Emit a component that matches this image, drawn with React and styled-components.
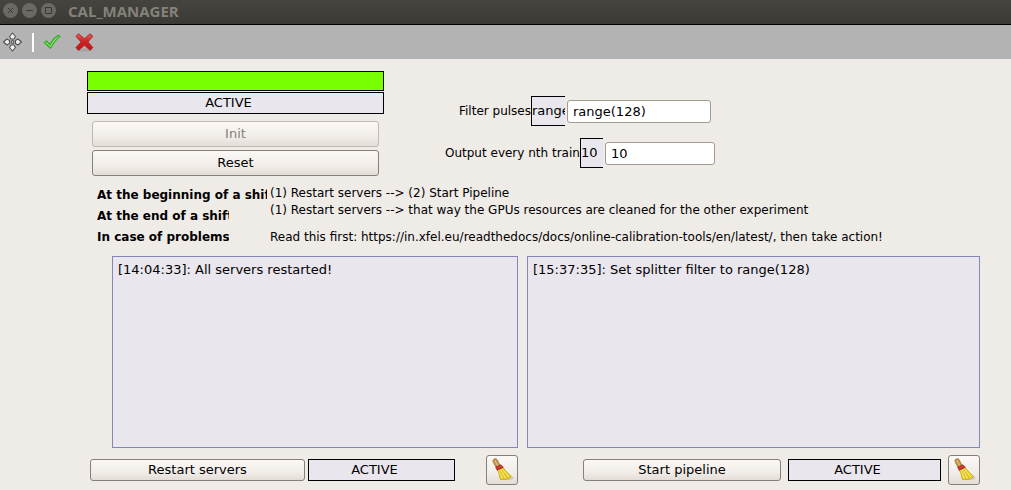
import React, { useState } from 'react';
import styled, { createGlobalStyle } from 'styled-components';

function BroomIcon() {
  return (
    <svg width="24" height="24" viewBox="0 0 24 24" aria-hidden="true">
      <ellipse cx="17.500" cy="20" rx="6" ry="2.200" fill="#cfcac5" />
      <path d="M3 2.200C3.200.8 6 0 7 1.400L9.800 7 6 9.200 3.400 4.500C3 3.800 2.800 3 3 2.200z" fill="#c39345" stroke="#97702f" strokeWidth=".7" />
      <path d="M4.800 2.500l3 5" stroke="#e6c07e" strokeWidth="1.200" />
      <path d="M7 11.500l6-2.500c1 2.500 4 4.800 8.500 9.500-1.500 2-6 3.600-11 3-1.500-3-.8-6.500-3.500-10z" fill="#ead02c" stroke="#bfa11c" strokeWidth=".8" strokeLinejoin="round" />
      <path d="M9 12.500l3.500 8M10.800 12l4.700 8M12.500 11.500l6 7" stroke="#fbee7c" strokeWidth="1" fill="none" />
      <path d="M10 13l4 8M11.800 12l5.500 7.800" stroke="#c9aa1c" strokeWidth=".6" fill="none" />
      <path d="M5.700 9.300L11 6.700l2.200 2.600-6 3z" fill="#c92622" stroke="#8f1515" strokeWidth=".6" strokeLinejoin="round" />
      <path d="M6.800 10.300l5.200-2.500" stroke="#e8605a" strokeWidth=".7" />
    </svg>
  );
}

function MoveIcon() {
  return (
    <svg width="21" height="20" viewBox="0 0 21 20" aria-hidden="true">
      <g fill="#f0f0f0" stroke="#505050" strokeWidth="1.100" strokeLinejoin="round">
        <path d="M10.500 1l3 3.500-1.500 2.500h-3L7.500 4.500z" />
        <path d="M10.500 19l3-3.500-1.500-2.500h-3l-1.500 2.500z" />
        <path d="M1.500 10L5 7l2.500 1.500v3L5 13z" />
        <path d="M19.500 10L16 7l-2.500 1.500v3L16 13z" />
        <circle cx="10.500" cy="10" r="1.400" />
      </g>
    </svg>
  );
}

function ApplyIcon() {
  return (
    <svg width="20" height="20" viewBox="0 0 20 20" aria-hidden="true">
      <path
        d="M2.500 10.500l2.200-1.500 3.300 3.600c2-3.800 4.500-7 8.500-9.200l1.500 1C14 7.500 11.500 11 8.500 16.200z"
        fill="#86ec5c"
        stroke="#37a52e"
        strokeWidth="1.200"
        strokeLinejoin="round"
      />
    </svg>
  );
}

function DeclineIcon() {
  return (
    <svg width="20" height="20" viewBox="0 0 20 20" aria-hidden="true">
      <defs>
        <linearGradient id="decline" x1="0" y1="0" x2="0" y2="1">
          <stop offset="0" stopColor="#e46060" />
          <stop offset=".45" stopColor="#cf2424" />
          <stop offset="1" stopColor="#c01010" />
        </linearGradient>
      </defs>
      <ellipse cx="10.500" cy="18" rx="8" ry="1.500" fill="#a2a2a2" />
      <path
        d="M4.500 1.800L10.500 6.800l5.500-5L18.800 4.300 13.800 10l5 5.500-2.600 2.800-5.700-5-6 5L2 15.600 7.200 10 2 4.400z"
        fill="url(#decline)"
        stroke="#b02222"
        strokeWidth="1"
        strokeLinejoin="round"
      />
    </svg>
  );
}

function Property({ id, label, current, boxWidth, inputWidth, inset }) {
  const [value, setValue] = useState(current);

  return (
    <PropertyRow $inset={inset}>
      <label htmlFor={id}>{label}</label>
      <CurrentValue $width={boxWidth}>{current}</CurrentValue>
      <ValueInput
        id={id}
        type="text"
        $width={inputWidth}
        value={value}
        onChange={(e) => setValue(e.target.value)}
      />
    </PropertyRow>
  );
}

function App() {
  return (
    <Window>
      <GlobalStyle />
      <TitleBar>
        <WindowButton type="button" aria-label="Close">
          <svg width="15" height="15" viewBox="0 0 15 15">
            <path d="M5 5l5 5M10 5l-5 5" />
          </svg>
        </WindowButton>
        <WindowButton type="button" aria-label="Minimize">
          <svg width="15" height="15" viewBox="0 0 15 15">
            <path d="M4 7.500h7" />
          </svg>
        </WindowButton>
        <WindowButton type="button" aria-label="Maximize">
          <svg width="15" height="15" viewBox="0 0 15 15">
            <path d="M4.500 4.500h6v6h-6z" />
          </svg>
        </WindowButton>
        <Title>CAL_MANAGER</Title>
      </TitleBar>

      <Toolbar>
        <ToolButton type="button" aria-label="Move">
          <MoveIcon />
        </ToolButton>
        <Separator />
        <ToolButton type="button" aria-label="Apply all">
          <ApplyIcon />
        </ToolButton>
        <ToolButton type="button" aria-label="Decline all">
          <DeclineIcon />
        </ToolButton>
      </Toolbar>

      <Scene>
        <TopRow>
          <StatePanel>
            <StateColor />
            <StateField>ACTIVE</StateField>
            <StateButtons>
              <Button type="button" disabled>
                Init
              </Button>
              <Button type="button">Reset</Button>
            </StateButtons>
          </StatePanel>

          <Properties>
            <Property
              id="filter"
              label="Filter pulses"
              current="range(128)"
              boxWidth={34}
              inputWidth={144}
              inset={14}
            />
            <Property
              id="train"
              label="Output every nth train"
              current="10"
              boxWidth={23}
              inputWidth={110}
              inset={0}
            />
          </Properties>
        </TopRow>

        <Instructions>
          <Headings>
            <Heading $width={170}>At the beginning of a shift</Heading>
            <Heading $width={132}>At the end of a shift</Heading>
            <Heading $width={132}>In case of problems</Heading>
          </Headings>
          <Steps>
            <p>(1) Restart servers --&gt; (2) Start Pipeline</p>
            <p>(1) Restart servers --&gt; that way the GPUs resources are cleaned for the other experiment</p>
            <p>
              Read this first: https://in.xfel.eu/readthedocs/docs/online-calibration-tools/en/latest/, then take
              action!
            </p>
          </Steps>
        </Instructions>

        <Logs>
          <Log readOnly aria-label="Server log" defaultValue="[14:04:33]: All servers restarted!" />
          <Log readOnly aria-label="Pipeline log" defaultValue="[15:37:35]: Set splitter filter to range(128)" />
        </Logs>

        <Footer>
          <Actions>
            <ActionButton type="button" $width={215}>
              Restart servers
            </ActionButton>
            <ActionState $width={147}>ACTIVE</ActionState>
            <ClearButton type="button" aria-label="Clear server log">
              <BroomIcon />
            </ClearButton>
          </Actions>
          <Actions $end>
            <ActionButton type="button" $width={198}>
              Start pipeline
            </ActionButton>
            <ActionState $width={153}>ACTIVE</ActionState>
            <ClearButton type="button" aria-label="Clear pipeline log">
              <BroomIcon />
            </ClearButton>
          </Actions>
        </Footer>
      </Scene>
    </Window>
  );
}

const GlobalStyle = createGlobalStyle`
  * {
    box-sizing: border-box;
  }

  body {
    margin: 0;
    background-color: #efebe7;
  }

  button,
  input,
  textarea {
    font: inherit;
    color: inherit;
    margin: 0;
  }

  p {
    margin: 0;
  }
`;
const Window = styled.div`
  display: flex;
  flex-direction: column;
  min-height: 100vh;
  color: #000;
  font-family: 'DejaVu Sans', sans-serif;
  font-size: 13px;
  line-height: 16px;
`;
const TitleBar = styled.header`
  display: flex;
  align-items: center;
  gap: 4px;
  height: 25px;
  padding: 0 3px 3px;
  background: linear-gradient(#45443f, #3b3a36);
  border-bottom: 1px solid #000;
`;
const WindowButton = styled.button`
  display: flex;
  width: 15px;
  height: 15px;
  padding: 0;
  border: none;
  border-radius: 50%;
  background-color: #6b6963;

  svg {
    fill: none;
    stroke: #3b3a36;
    stroke-width: 1;
  }
`;
const Title = styled.h1`
  margin: 0 0 0 8px;
  color: #85827b;
  font-family: 'Open Sans', sans-serif;
  font-size: 15px;
  font-weight: 700;
  line-height: 20px;
`;
const Toolbar = styled.div`
  display: flex;
  align-items: center;
  gap: 8px;
  height: 34px;
  padding: 0 2px;
  background-color: #b3b3b3;
`;
const ToolButton = styled.button`
  display: flex;
  padding: 0;
  margin-right: 4px;
  border: none;
  background: none;

  &:first-child {
    margin-right: 1px;
  }
`;
const Separator = styled.div`
  width: 2px;
  height: 19px;
  background-color: #fff;
`;
const Scene = styled.main`
  flex: 1;
  display: flex;
  flex-direction: column;
  padding: 12px 31px 5px 87px;
`;
const TopRow = styled.div`
  display: flex;
  gap: 61px;
`;
const StatePanel = styled.section`
  display: flex;
  flex-direction: column;
  gap: 1px;
  width: 297px;
`;
const StateColor = styled.div`
  height: 20px;
  border: 1px solid #000;
  background-color: #78ff00;
`;
const StateField = styled.div`
  display: flex;
  align-items: center;
  justify-content: center;
  height: 22px;
  padding-right: 14px;
  border: 1px solid #000;
  background-color: #e9e6ed;
`;
const StateButtons = styled.div`
  display: flex;
  flex-direction: column;
  gap: 3px;
  padding: 6px 5px 0;
`;
const Button = styled.button`
  height: 26px;
  padding: 0;
  border: 1px solid #85807a;
  border-radius: 3px;
  background: linear-gradient(#fbf8f5, #f1ede9 60%, #e4ddd6);

  &:disabled {
    color: #85807a;
    border-color: #bfbab4;
  }
`;
const Properties = styled.section`
  display: flex;
  flex-direction: column;
  gap: 12px;
  padding-top: 25px;
  font-size: 12px;
`;
const PropertyRow = styled.div`
  display: flex;
  align-items: center;
  padding-left: ${({ $inset }) => $inset}px;
  white-space: nowrap;
`;
const CurrentValue = styled.output`
  width: ${({ $width }) => $width}px;
  height: 30px;
  margin-right: 2px;
  overflow: hidden;
  border: 1px solid #000;
  border-right: none;
  background-color: #e9e6ed;
  font-size: 13px;
  line-height: 28px;
`;
const ValueInput = styled.input`
  width: ${({ $width }) => $width}px;
  height: 23px;
  padding: 0 5px;
  border: 1px solid #a39a92;
  border-radius: 3px;
  background-color: #fff;
  font-size: 13px;
`;
const Instructions = styled.section`
  display: flex;
  gap: 3px;
  padding: 9px 0 8px 10px;
  font-size: 12px;
  white-space: nowrap;
`;
const Headings = styled.div`
  width: 170px;
`;
const Heading = styled.h2`
  width: ${({ $width }) => $width}px;
  margin: 0;
  overflow: hidden;
  font-size: 12px;
  font-weight: 700;
  line-height: 21px;
`;
const Steps = styled.div`
  line-height: 17px;

  p:last-child {
    margin-top: 10px;
  }
`;
const Logs = styled.section`
  flex: 1;
  display: grid;
  grid-template-columns: 406fr 453fr;
  gap: 9px;
  padding-left: 25px;
`;
const Log = styled.textarea`
  display: block;
  width: 100%;
  min-height: 120px;
  padding: 5px;
  border: 1px solid #8685bb;
  background-color: #e9e6ed;
  outline: none;
  resize: none;
`;
const Footer = styled.footer`
  display: grid;
  grid-template-columns: 431fr 453fr;
  gap: 9px;
  padding-top: 7px;
`;
const Actions = styled.div`
  display: flex;
  align-items: center;
  justify-content: ${({ $end }) => ($end ? 'flex-end' : 'flex-start')};
  gap: ${({ $end }) => ($end ? 7 : 3)}px;
  padding-left: 3px;
`;
const ActionButton = styled(Button)`
  width: ${({ $width }) => $width}px;
  height: 22px;
`;
const ActionState = styled(StateField)`
  width: ${({ $width }) => $width}px;
`;
const ClearButton = styled(Button)`
  display: flex;
  align-items: center;
  justify-content: center;
  width: 32px;
  height: 30px;
  margin-left: auto;

  ${Actions}:last-child & {
    margin-left: 0;
  }
`;

export default App;
